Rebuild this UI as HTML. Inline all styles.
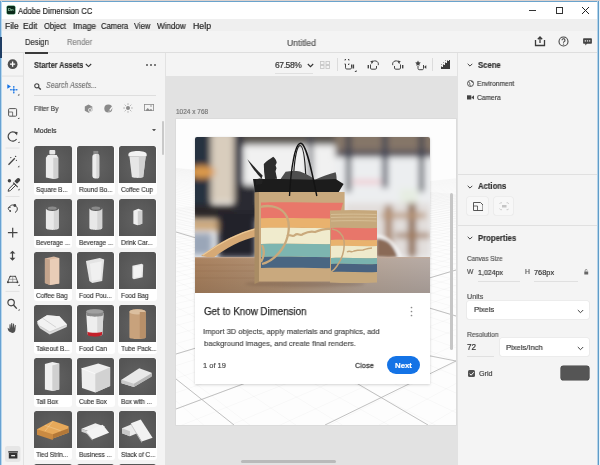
<!DOCTYPE html>
<html><head><meta charset="utf-8">
<style>
*{box-sizing:border-box;margin:0;padding:0}
html,body{width:600px;height:465px;overflow:hidden}
body{position:relative;background:#f4f4f4;font-family:"Liberation Sans",sans-serif;color:#333}
.t{will-change:transform;-webkit-text-stroke:.18px currentColor}
.a{position:absolute}
.t{position:absolute;white-space:nowrap;line-height:1}
.lbl{font-size:7px;color:#2c2c2c;letter-spacing:-0.1px;-webkit-text-stroke:.1px #2c2c2c}
</style></head><body>
<!-- window frame -->
<div class="a" style="left:0;top:0;width:600px;height:1px;background:#dcd2cf"></div>
<div class="a" style="left:0;top:1px;width:600px;height:1px;background:#6aa3cc"></div>
<!-- title bar -->
<div class="a" style="left:0;top:2px;width:600px;height:17px;background:#fff"></div>
<!-- menu bar -->
<div class="a" style="left:0;top:19px;width:600px;height:12px;background:#efefef"></div>
<!-- tab bar -->
<div class="a" style="left:0;top:31px;width:600px;height:21px;background:#f4f4f4"></div>
<div class="a" style="left:0;top:52px;width:600px;height:1px;background:#dedede"></div>
<!-- left toolbar -->
<div class="a" style="left:0;top:53px;width:23px;height:412px;background:#f4f4f4"></div>
<div class="a" style="left:23px;top:53px;width:1px;height:412px;background:#e2e2e2"></div>

<!-- toolbar -->
<svg class="a" style="left:0;top:53px" width="23" height="412" viewBox="0 53 23 412">
<g fill="#505050" stroke="none">
<circle cx="12.6" cy="64.2" r="4.9"/>
</g>
<path d="M12.6 61.6v5.2M10 64.2h5.2" stroke="#fff" stroke-width="1.3"/>
<rect x="2" y="75.6" width="21" height="1" fill="#e2e2e2"/>
<path d="M7.3 84.3l3.6 2.2-3.6 2.3z" fill="#1473e6"/>
<g fill="#1473e6"><circle cx="13.8" cy="86.7" r=".8"/><circle cx="13.8" cy="92.8" r=".8"/><circle cx="10.8" cy="89.8" r=".8"/><circle cx="16.8" cy="89.8" r=".8"/><circle cx="13.8" cy="89.8" r=".9"/></g>
<path d="M11 89.8h5.6M13.8 87v5.6" stroke="#1473e6" stroke-width=".7"/>
<g fill="#333"><path d="M19.3 93.8v1.6h-1.6z"/><path d="M19.3 117.4v1.6h-1.6z"/><path d="M19.5 141.4v1.6h-1.6z"/><path d="M19.3 165.6v1.6h-1.6z"/><path d="M19.5 188.6v1.6h-1.6z"/><path d="M19.6 284.3v1.6H18z"/><path d="M19.6 309v1.6H18z"/></g>
<rect x="8.6" y="108.6" width="8" height="7.6" rx="1" fill="none" stroke="#555" stroke-width="1"/>
<path d="M8.8 112h3.8v4" fill="none" stroke="#555" stroke-width=".8"/>
<path d="M16.2 133.5A4.6 4.6 0 1 0 16.6 139" fill="none" stroke="#444" stroke-width="1.2"/>
<path d="M14.2 131.8l3.4.1-.6 3.5z" fill="#444"/>
<rect x="5.5" y="147.6" width="14" height=".9" fill="#e0e0e0"/>
<path d="M8.5 164.8l6.3-6.6" stroke="#444" stroke-width="1.3"/>
<g fill="#444"><circle cx="10.8" cy="157.6" r=".7"/><circle cx="15.6" cy="156.4" r=".7"/><circle cx="16.4" cy="160.3" r=".6"/></g>
<path d="M14.3 183.5l-5.6 5.6-.6 2.2 2.2-.6 5.6-5.6z" fill="none" stroke="#444" stroke-width="1"/>
<path d="M13.2 182.6l4.5 4.5M15.2 181.2l2.2-2.2c.5-.5 1.3-.5 1.8 0s.5 1.3 0 1.8l-2.2 2.2z" stroke="#444" stroke-width="1.1" fill="#444"/>
<circle cx="9.4" cy="180.8" r="1.7" fill="#444"/>
<rect x="5.5" y="196" width="14" height=".9" fill="#e0e0e0"/>
<path d="M10.5 207.5C8 206 7.5 209 9.5 210.5M15.5 206c2.5 1 2.5 5-.5 6.5" fill="none" stroke="#444" stroke-width="1"/>
<path d="M9 208c1-3 4-4 6.5-2" fill="none" stroke="#444" stroke-width="1"/>
<circle cx="14.8" cy="205.5" r="1.4" fill="#444"/><circle cx="10.2" cy="211" r=".9" fill="#444"/>
<path d="M12.7 227.8v9.6M7.9 232.6h9.6" stroke="#444" stroke-width="1.2"/>
<path d="M12.5 252.5v6.5" stroke="#444" stroke-width="1.2"/>
<path d="M9.6 253.5l2.9-2.8 2.9 2.8zM9.6 257.8l2.9 3 2.9-3z" fill="#444"/>
<path d="M7.6 282.3l2.4-6h5.5l2.3 6z" fill="none" stroke="#444" stroke-width=".9"/>
<path d="M12.7 276.3v6M9 279.3h7.3" stroke="#777" stroke-width=".6"/>
<g fill="#444"><circle cx="8" cy="282.2" r="1"/><circle cx="17.4" cy="282.2" r="1"/><circle cx="10.3" cy="276.5" r=".7"/><circle cx="15.2" cy="276.5" r=".7"/></g>
<rect x="5.5" y="290.9" width="14" height=".9" fill="#e0e0e0"/>
<circle cx="11.1" cy="302.6" r="3.2" fill="none" stroke="#444" stroke-width="1.2"/>
<path d="M13.5 305l3.3 3.6" stroke="#444" stroke-width="1.4"/>
<path d="M9.5 331.8c-1.2-1-2-2.6-1.8-4 .5.2 1.2.8 1.6 1.5l.2-4.6c.2-.6 1-.6 1.1 0l.2 3.5.4-4.8c.2-.6 1-.6 1.1 0l.2 4.7.6-4.2c.2-.6.9-.5 1 .1l.1 4.3.7-3c.2-.5.9-.4.9.1l-.4 4.6c-.2 1.8-1.4 3-3.1 3z" fill="#505050"/>
<rect x="5" y="446" width="15.5" height="16" rx="2.5" fill="#e6e6e6"/>
<rect x="8.3" y="451.2" width="9.6" height="1.4" fill="#333"/>
<rect x="8.8" y="453" width="8.6" height="5.5" fill="#333"/>
<rect x="11.2" y="455" width="3.8" height="1.3" fill="#e6e6e6"/>
</svg>
<!-- end toolbar -->
<!-- assets panel -->
<div class="a" style="left:24px;top:53px;width:142px;height:412px;background:#f4f4f4"></div>
<div class="a" style="left:165px;top:53px;width:1px;height:412px;background:#e2e2e2"></div>







<!-- assets panel content -->
<div class="t" id="starter" style="left:33.8px;top:61.5px;font-size:8.2px;font-weight:bold;color:#333;transform:scaleX(.89);transform-origin:0 0">Starter Assets</div>
<svg class="a" style="left:85px;top:63px" width="7" height="5" viewBox="0 0 7 5"><path d="M.8 1l2.7 2.6L6.2 1" fill="none" stroke="#333" stroke-width="1.1"/></svg>
<div class="a" style="left:145.5px;top:63.6px;width:2px;height:2px;border-radius:1px;background:#555;box-shadow:4px 0 0 #555,8px 0 0 #555"></div>
<svg class="a" style="left:34px;top:82.5px" width="7.5" height="7" viewBox="0 0 7.5 7"><circle cx="2.8" cy="2.8" r="2.1" fill="none" stroke="#444" stroke-width="1.1"/><path d="M4.3 4.3L6.8 6.6" stroke="#444" stroke-width="1.4"/></svg>
<div class="t" id="search" style="left:45.5px;top:81.3px;font-size:8.6px;font-style:italic;color:#777;transform:scaleX(.82);transform-origin:0 0">Search Assets...</div>
<div class="a" style="left:34px;top:94.5px;width:122px;height:1px;background:#dedede"></div>
<div class="t" id="filter" style="left:33.8px;top:104.8px;font-size:7px;color:#444;transform:scaleX(.95);transform-origin:0 0">Filter By</div>
<svg class="a" style="left:84px;top:103.5px" width="9" height="9" viewBox="0 0 9 9"><path d="M4.5.5l3.7 2v4.2l-3.7 2-3.7-2V2.5z" fill="#8a8a8a"/><path d="M4.5 4.5l3.7-2v4.2l-3.7 2z" fill="#a8a8a8"/><circle cx="6" cy="6" r="1.8" fill="#f4f4f4"/><circle cx="6" cy="6" r="1" fill="#8a8a8a"/></svg>
<svg class="a" style="left:104px;top:103.5px" width="9" height="9" viewBox="0 0 9 9"><circle cx="4.3" cy="4.5" r="4" fill="#8a8a8a"/><path d="M4.5 8.2L8.3 3" stroke="#f4f4f4" stroke-width="1.4"/><circle cx="5" cy="7" r=".9" fill="#8a8a8a"/></svg>
<svg class="a" style="left:123px;top:102.8px" width="10" height="10" viewBox="0 0 10 10"><circle cx="5" cy="5" r="2" fill="#8a8a8a"/><g stroke="#9a9a9a" stroke-width=".8"><path d="M5 .3v1.6M5 8.1v1.6M.3 5h1.6M8.1 5h1.6M1.7 1.7l1.1 1.1M7.2 7.2l1.1 1.1M1.7 8.3l1.1-1.1M7.2 2.8l1.1-1.1"/></g></svg>
<svg class="a" style="left:143.5px;top:103.8px" width="10" height="7.5" viewBox="0 0 10 7.5"><rect x=".4" y=".4" width="9.2" height="6.7" fill="none" stroke="#8a8a8a" stroke-width=".8"/><path d="M1 7l2.7-3 2 2 1.3-1.3L9 7z" fill="#8a8a8a"/><rect x="6" y="1.5" width="2" height="1" fill="#9a9a9a"/></svg>
<div class="t" id="models" style="left:34px;top:126.8px;font-size:7px;color:#333">Models</div>
<svg class="a" style="left:151.5px;top:128.5px" width="4" height="2.5" viewBox="0 0 4 2.5"><path d="M0 0h4L2 2.5z" fill="#555"/></svg>
<div class="a" style="left:162.2px;top:121.2px;width:2.2px;height:34px;background:#c9c9c9;border-radius:1px"></div>
<div class="a" style="left:33.7px;top:145.8px;width:38.8px;height:48.9px;background:#fff;border-radius:3px"></div>
<div class="a" style="left:34.3px;top:146.4px;width:37.6px;height:36.5px;background:radial-gradient(ellipse at 50% 55%,#626262,#555 80%);border-radius:2.5px 2.5px 0 0;overflow:hidden">
<svg width="37.6" height="36.5" viewBox="0 0 38 37" style="display:block"><rect x="15.5" y="4" width="6" height="4.5" rx="1" fill="#e8e8e8"/><path d="M14 9h9l1.5 3v20.5l-5 1-7.5-1.5V12z" fill="#ececec"/><path d="M19.5 12l5-0v20.5l-5 1z" fill="#d0d0d0"/></svg>
</div>
<div class="t lbl" style="left:36.3px;top:185.7px;transform:scaleX(.93);transform-origin:0 0">Square B...</div>
<div class="a" style="left:76.0px;top:145.8px;width:38.8px;height:48.9px;background:#fff;border-radius:3px"></div>
<div class="a" style="left:76.6px;top:146.4px;width:37.6px;height:36.5px;background:radial-gradient(ellipse at 50% 55%,#626262,#555 80%);border-radius:2.5px 2.5px 0 0;overflow:hidden">
<svg width="37.6" height="36.5" viewBox="0 0 38 37" style="display:block"><rect x="16.5" y="5" width="5" height="3.5" fill="#8a8a8a"/><rect x="15.5" y="8" width="7" height="25" rx="3" fill="#ececec"/><rect x="19.5" y="8" width="3" height="25" rx="1.5" fill="#d6d6d6"/></svg>
</div>
<div class="t lbl" style="left:78.6px;top:185.7px;transform:scaleX(.93);transform-origin:0 0">Round Bo...</div>
<div class="a" style="left:118.1px;top:145.8px;width:38.8px;height:48.9px;background:#fff;border-radius:3px"></div>
<div class="a" style="left:118.7px;top:146.4px;width:37.6px;height:36.5px;background:radial-gradient(ellipse at 50% 55%,#626262,#555 80%);border-radius:2.5px 2.5px 0 0;overflow:hidden">
<svg width="37.6" height="36.5" viewBox="0 0 38 37" style="display:block"><path d="M9.5 8.5C9.5 4 28 4 28 8.5L28 10.5H9.5z" fill="#f2f2f2"/><path d="M10.5 10.5h16.5l-2.5 21c-3 1.2-8.5 1.2-11.5 0z" fill="#e6e6e6"/><path d="M20 10.5h7l-2.5 21-4 .6z" fill="#d2d2d2"/></svg>
</div>
<div class="t lbl" style="left:120.7px;top:185.7px;transform:scaleX(.93);transform-origin:0 0">Coffee Cup</div>
<div class="a" style="left:33.7px;top:198.8px;width:38.8px;height:48.9px;background:#fff;border-radius:3px"></div>
<div class="a" style="left:34.3px;top:199.4px;width:37.6px;height:36.5px;background:radial-gradient(ellipse at 50% 55%,#626262,#555 80%);border-radius:2.5px 2.5px 0 0;overflow:hidden">
<svg width="37.6" height="36.5" viewBox="0 0 38 37" style="display:block"><path d="M12 10c0-3 13-3 13 0v19.5c0 2.5-13 2.5-13 0z" fill="#e8e8e8"/><path d="M20 9v21.5c3 0 5-.5 5-1V10z" fill="#d4d4d4"/><ellipse cx="18.5" cy="9.5" rx="6.5" ry="2.6" fill="#5e5e5e"/><ellipse cx="18.5" cy="9.3" rx="4.5" ry="1.6" fill="#8a8a8a"/></svg>
</div>
<div class="t lbl" style="left:36.3px;top:238.7px;transform:scaleX(.93);transform-origin:0 0">Beverage ...</div>
<div class="a" style="left:76.0px;top:198.8px;width:38.8px;height:48.9px;background:#fff;border-radius:3px"></div>
<div class="a" style="left:76.6px;top:199.4px;width:37.6px;height:36.5px;background:radial-gradient(ellipse at 50% 55%,#626262,#555 80%);border-radius:2.5px 2.5px 0 0;overflow:hidden">
<svg width="37.6" height="36.5" viewBox="0 0 38 37" style="display:block"><path d="M12.5 10c0-3 13-3 13 0v19.5c0 2.5-13 2.5-13 0z" fill="#e8e8e8"/><path d="M20.5 9v21.5c3 0 5-.5 5-1V10z" fill="#d4d4d4"/><ellipse cx="19" cy="9.5" rx="6.5" ry="2.6" fill="#5e5e5e"/><ellipse cx="19" cy="9.3" rx="4.5" ry="1.6" fill="#8a8a8a"/></svg>
</div>
<div class="t lbl" style="left:78.6px;top:238.7px;transform:scaleX(.93);transform-origin:0 0">Beverage ...</div>
<div class="a" style="left:118.1px;top:198.8px;width:38.8px;height:48.9px;background:#fff;border-radius:3px"></div>
<div class="a" style="left:118.7px;top:199.4px;width:37.6px;height:36.5px;background:radial-gradient(ellipse at 50% 55%,#626262,#555 80%);border-radius:2.5px 2.5px 0 0;overflow:hidden">
<svg width="37.6" height="36.5" viewBox="0 0 38 37" style="display:block"><path d="M14.5 12l5-2 4 1.5v13.5l-5 1.5-4-1.5z" fill="#eeeeee"/><path d="M19 12.5l4.5-1v13.5l-4.5 1.5z" fill="#cfcfcf"/></svg>
</div>
<div class="t lbl" style="left:120.7px;top:238.7px;transform:scaleX(.93);transform-origin:0 0">Drink Car...</div>
<div class="a" style="left:33.7px;top:251.8px;width:38.8px;height:48.9px;background:#fff;border-radius:3px"></div>
<div class="a" style="left:34.3px;top:252.4px;width:37.6px;height:36.5px;background:radial-gradient(ellipse at 50% 55%,#626262,#555 80%);border-radius:2.5px 2.5px 0 0;overflow:hidden">
<svg width="37.6" height="36.5" viewBox="0 0 38 37" style="display:block"><path d="M11 6.5l9-2 5.5 1.5v26l-9.5 1.5-5-2z" fill="#dcbba3"/><path d="M16 7.5l9.5-1.5v26L16 33.5z" fill="#e9cdb7"/><path d="M11 6.5l5 1v26l-5-2z" fill="#c4a48c"/></svg>
</div>
<div class="t lbl" style="left:36.3px;top:291.7px;transform:scaleX(.93);transform-origin:0 0">Coffee Bag</div>
<div class="a" style="left:76.0px;top:251.8px;width:38.8px;height:48.9px;background:#fff;border-radius:3px"></div>
<div class="a" style="left:76.6px;top:252.4px;width:37.6px;height:36.5px;background:radial-gradient(ellipse at 50% 55%,#626262,#555 80%);border-radius:2.5px 2.5px 0 0;overflow:hidden">
<svg width="37.6" height="36.5" viewBox="0 0 38 37" style="display:block"><path d="M9 9l14-3 4.5 1.5-2 22-10 2-3-2z" fill="#e4e4e4"/><path d="M13 12l12-2.5-1 18-9 2z" fill="#f0f0f0"/></svg>
</div>
<div class="t lbl" style="left:78.6px;top:291.7px;transform:scaleX(.93);transform-origin:0 0">Food Pou...</div>
<div class="a" style="left:118.1px;top:251.8px;width:38.8px;height:48.9px;background:#fff;border-radius:3px"></div>
<div class="a" style="left:118.7px;top:252.4px;width:37.6px;height:36.5px;background:radial-gradient(ellipse at 50% 55%,#626262,#555 80%);border-radius:2.5px 2.5px 0 0;overflow:hidden">
<svg width="37.6" height="36.5" viewBox="0 0 38 37" style="display:block"><path d="M13.5 14l9.5-2 1.5 1-.5 12.5-9 2-1.5-1z" fill="#e8e8e8"/><path d="M15 15l8-1.5-.5 11-7.5 1.5z" fill="#f3f3f3"/></svg>
</div>
<div class="t lbl" style="left:120.7px;top:291.7px;transform:scaleX(.93);transform-origin:0 0">Food Bag</div>
<div class="a" style="left:33.7px;top:304.8px;width:38.8px;height:48.9px;background:#fff;border-radius:3px"></div>
<div class="a" style="left:34.3px;top:305.4px;width:37.6px;height:36.5px;background:radial-gradient(ellipse at 50% 55%,#626262,#555 80%);border-radius:2.5px 2.5px 0 0;overflow:hidden">
<svg width="37.6" height="36.5" viewBox="0 0 38 37" style="display:block"><path d="M3.3 16.5l9.8-6 12.6.8 7.7 8.4-.3 2.5-17.2 7.7-10-6.3-2.6-4.5z" fill="#dcdcdc"/><path d="M3.3 16.5l9.8-6 12.6.8 7.7 8.4-17.5 7.2-9.9-5.9z" fill="#f2f2f2"/><path d="M8.5 13.3l13.8 9.3M6.1 21.5l9.8 5.9 17.2-7.2" stroke="#c8c8c8" stroke-width=".7" fill="none"/></svg>
</div>
<div class="t lbl" style="left:36.3px;top:344.7px;transform:scaleX(.93);transform-origin:0 0">Takeout B...</div>
<div class="a" style="left:76.0px;top:304.8px;width:38.8px;height:48.9px;background:#fff;border-radius:3px"></div>
<div class="a" style="left:76.6px;top:305.4px;width:37.6px;height:36.5px;background:radial-gradient(ellipse at 50% 55%,#626262,#555 80%);border-radius:2.5px 2.5px 0 0;overflow:hidden">
<svg width="37.6" height="36.5" viewBox="0 0 38 37" style="display:block"><path d="M9.3 8.5c0-3 17.5-3 17.5 0l-1.2 21c0 2.5-15 2.5-15 0z" fill="#eeeeee"/><path d="M20.5 7v24.5c3 0 5-.5 5.1-1.5L26.8 8.5z" fill="#d8d8d8"/><path d="M10.5 27c2.5 1.5 12.5 1.5 15 0l-.2 3c0 2.8-14.6 2.8-14.6 0z" fill="#c4202a"/><path d="M9.3 6.5c0-3 17.5-3 17.5 0v3.5c0 2.5-17.5 2.5-17.5 0z" fill="#8a8a8a"/><ellipse cx="18" cy="6.5" rx="8.75" ry="2.2" fill="#a0a0a0"/></svg>
</div>
<div class="t lbl" style="left:78.6px;top:344.7px;transform:scaleX(.93);transform-origin:0 0">Food Can</div>
<div class="a" style="left:118.1px;top:304.8px;width:38.8px;height:48.9px;background:#fff;border-radius:3px"></div>
<div class="a" style="left:118.7px;top:305.4px;width:37.6px;height:36.5px;background:radial-gradient(ellipse at 50% 55%,#626262,#555 80%);border-radius:2.5px 2.5px 0 0;overflow:hidden">
<svg width="37.6" height="36.5" viewBox="0 0 38 37" style="display:block"><path d="M10.5 7c0-3.5 16.5-3.5 16.5 0v26c0 2-16.5 2-16.5 0z" fill="#c8a27c"/><ellipse cx="18.75" cy="7" rx="8.25" ry="2.7" fill="#dbbf9f"/><path d="M21 7v27c3 0 6-.5 6-1V7z" fill="#b89069"/></svg>
</div>
<div class="t lbl" style="left:120.7px;top:344.7px;transform:scaleX(.93);transform-origin:0 0">Tube Pack...</div>
<div class="a" style="left:33.7px;top:357.8px;width:38.8px;height:48.9px;background:#fff;border-radius:3px"></div>
<div class="a" style="left:34.3px;top:358.4px;width:37.6px;height:36.5px;background:radial-gradient(ellipse at 50% 55%,#626262,#555 80%);border-radius:2.5px 2.5px 0 0;overflow:hidden">
<svg width="37.6" height="36.5" viewBox="0 0 38 37" style="display:block"><path d="M11 6l7.5-2 7 1.5v26.5l-7 1.5-7.5-1.5z" fill="#f0f0f0"/><path d="M18.5 7.5l7-2v26.5l-7 1.5z" fill="#d0d0d0"/></svg>
</div>
<div class="t lbl" style="left:36.3px;top:397.7px;transform:scaleX(.93);transform-origin:0 0">Tall Box</div>
<div class="a" style="left:76.0px;top:357.8px;width:38.8px;height:48.9px;background:#fff;border-radius:3px"></div>
<div class="a" style="left:76.6px;top:358.4px;width:37.6px;height:36.5px;background:radial-gradient(ellipse at 50% 55%,#626262,#555 80%);border-radius:2.5px 2.5px 0 0;overflow:hidden">
<svg width="37.6" height="36.5" viewBox="0 0 38 37" style="display:block"><path d="M4.5 10.5l17-5 12 4v19l-15 6.5-13.5-4.5z" fill="#eeeeee"/><path d="M18.5 16l15-6.5v19l-15 6.5z" fill="#d2d2d2"/><path d="M4.5 10.5l14 5.5" stroke="#ffffff" stroke-width=".6"/></svg>
</div>
<div class="t lbl" style="left:78.6px;top:397.7px;transform:scaleX(.93);transform-origin:0 0">Cube Box</div>
<div class="a" style="left:118.1px;top:357.8px;width:38.8px;height:48.9px;background:#fff;border-radius:3px"></div>
<div class="a" style="left:118.7px;top:358.4px;width:37.6px;height:36.5px;background:radial-gradient(ellipse at 50% 55%,#626262,#555 80%);border-radius:2.5px 2.5px 0 0;overflow:hidden">
<svg width="37.6" height="36.5" viewBox="0 0 38 37" style="display:block"><path d="M2.5 22l18-11.5 12.5 4.5v3.5l-18 11-12.5-4z" fill="#e9e9e9"/><path d="M2.5 22l12.5 4v3.5l-12.5-4z" fill="#c9c9c9"/><path d="M15 26l18-10.5v3.5l-18 10.5z" fill="#b8b8b8"/></svg>
</div>
<div class="t lbl" style="left:120.7px;top:397.7px;transform:scaleX(.93);transform-origin:0 0">Box with ...</div>
<div class="a" style="left:33.7px;top:410.8px;width:38.8px;height:48.9px;background:#fff;border-radius:3px"></div>
<div class="a" style="left:34.3px;top:411.4px;width:37.6px;height:36.5px;background:radial-gradient(ellipse at 50% 55%,#626262,#555 80%);border-radius:2.5px 2.5px 0 0;overflow:hidden">
<svg width="37.6" height="36.5" viewBox="0 0 38 37" style="display:block"><path d="M3 18.5l16-8.5 16 5.5v6.5l-16 6-16-4.5z" fill="#e7a95a"/><path d="M3 18.5l16 5v6L3 24z" fill="#c98a42"/><path d="M19 23.5l16-6v4.5l-16 6z" fill="#b37838"/><path d="M11 14.5l16 5.5M19 10.5l-8 10" stroke="#f0d2a0" stroke-width=".5"/></svg>
</div>
<div class="t lbl" style="left:36.3px;top:450.7px;transform:scaleX(.93);transform-origin:0 0">Tied Strin...</div>
<div class="a" style="left:76.0px;top:410.8px;width:38.8px;height:48.9px;background:#fff;border-radius:3px"></div>
<div class="a" style="left:76.6px;top:411.4px;width:37.6px;height:36.5px;background:radial-gradient(ellipse at 50% 55%,#626262,#555 80%);border-radius:2.5px 2.5px 0 0;overflow:hidden">
<svg width="37.6" height="36.5" viewBox="0 0 38 37" style="display:block"><path d="M4.5 18l14-5.5 10 3.5-14 5.5z" fill="#f0f0f0"/><path d="M4.5 18l10 3.5v3l-10-3.5z" fill="#cfcfcf"/><path d="M9 21l17-7 6.5 8-17 7z" fill="#f4f4f4"/><path d="M9 21l6.5 8v1L9 22z" fill="#c6c6c6"/></svg>
</div>
<div class="t lbl" style="left:78.6px;top:450.7px;transform:scaleX(.93);transform-origin:0 0">Business ...</div>
<div class="a" style="left:118.1px;top:410.8px;width:38.8px;height:48.9px;background:#fff;border-radius:3px"></div>
<div class="a" style="left:118.7px;top:411.4px;width:37.6px;height:36.5px;background:radial-gradient(ellipse at 50% 55%,#626262,#555 80%);border-radius:2.5px 2.5px 0 0;overflow:hidden">
<svg width="37.6" height="36.5" viewBox="0 0 38 37" style="display:block"><path d="M3 17.5l11-4.5 8 3v5l-11 4.5-8-3z" fill="#eaeaea"/><path d="M3 17.5l8 3v5l-8-3z" fill="#c9c9c9"/><path d="M12 12.5l10-4 12 18.5-11 4z" fill="#f2f2f2"/><path d="M12 12.5l11 18.5v1.5L12 14z" fill="#c4c4c4"/></svg>
</div>
<div class="t lbl" style="left:120.7px;top:450.7px;transform:scaleX(.93);transform-origin:0 0">Stack of C...</div>
<div class="a" style="left:33.7px;top:463.8px;width:38.8px;height:48.9px;background:#fff;border-radius:3px"></div>
<div class="a" style="left:34.3px;top:464.4px;width:37.6px;height:36.5px;background:radial-gradient(ellipse at 50% 55%,#626262,#555 80%);border-radius:2.5px 2.5px 0 0;overflow:hidden">
</div>
<div class="a" style="left:76.0px;top:463.8px;width:38.8px;height:48.9px;background:#fff;border-radius:3px"></div>
<div class="a" style="left:76.6px;top:464.4px;width:37.6px;height:36.5px;background:radial-gradient(ellipse at 50% 55%,#626262,#555 80%);border-radius:2.5px 2.5px 0 0;overflow:hidden">
</div>
<div class="a" style="left:118.1px;top:463.8px;width:38.8px;height:48.9px;background:#fff;border-radius:3px"></div>
<div class="a" style="left:118.7px;top:464.4px;width:37.6px;height:36.5px;background:radial-gradient(ellipse at 50% 55%,#626262,#555 80%);border-radius:2.5px 2.5px 0 0;overflow:hidden">
</div>
<!-- end assets -->
<!-- viewport -->
<div class="a" style="left:166px;top:53px;width:292px;height:23px;background:#f4f4f4"></div>
<div class="a" style="left:166px;top:76px;width:292px;height:389px;background:#e2e2e2"></div>
<!-- canvas -->
<div class="a" style="left:176px;top:119px;width:280px;height:306px;background:#fdfdfd;box-shadow:0 0 0 .6px #d6d6d6"></div>

<!-- grid -->
<svg class="a" style="left:176px;top:119px" width="280" height="306" viewBox="176 119 280 306">
<path d="M119.7 163.0L3209.2 454.6M116.6 163.1L3153.9 455.2M113.5 163.3L3098.5 455.8M110.3 163.4L3043.2 456.4M107.1 163.5L2987.8 457.1M103.9 163.7L2932.5 457.7M100.6 163.8L2877.1 458.3M97.4 164.0L2821.8 459.0M94.1 164.1L2766.5 459.6M90.7 164.3L2711.1 460.2M87.4 164.4L2655.8 460.9M84.0 164.5L2600.4 461.5M80.6 164.7L2545.1 462.1M77.2 164.8L2489.8 462.7M73.7 165.0L2434.4 463.4M70.2 165.1L2379.1 464.0M66.7 165.3L2323.7 464.6M63.2 165.4L2268.4 465.3M59.6 165.6L2213.1 465.9M56.0 165.8L2157.7 466.5M52.4 165.9L2102.4 467.2M48.7 166.1L2047.0 467.8M45.0 166.2L1991.7 468.4M41.3 166.4L1936.4 469.1M37.5 166.6L1881.0 469.7M33.7 166.7L1825.7 470.3M29.9 166.9L1770.3 470.9M26.0 167.1L1715.0 471.6M22.2 167.2L1659.6 472.2M18.2 167.4L1604.3 472.8M14.3 167.6L1549.0 473.5M10.3 167.7L1493.6 474.1M6.3 167.9L1438.3 474.7M2.2 168.1L1382.9 475.4M-1.9 168.3L1327.6 476.0M-6.0 168.4L1272.3 476.6M-10.2 168.6L1216.9 477.3M-14.4 168.8L1161.6 477.9M-18.7 169.0L1106.2 478.5M-22.9 169.2L1050.9 479.1M-27.3 169.4L995.6 479.8M-31.6 169.5L940.2 480.4M-36.0 169.7L884.9 481.0M-40.5 169.9L829.5 481.7M-45.0 170.1L774.2 482.3M-49.5 170.3L718.9 482.9M-54.0 170.5L663.5 483.6M-58.7 170.7L608.2 484.2M-63.3 170.9L552.8 484.8M-68.0 171.1L497.5 485.5M-72.8 171.3L442.1 486.1M-77.5 171.5L386.8 486.7M-82.4 171.7L331.5 487.3M-87.3 172.0L276.1 488.0M-92.2 172.2L220.8 488.6M-97.2 172.4L165.4 489.2M-102.2 172.6L110.1 489.9M645.1 158.4L-2753.1 522.5M648.6 158.5L-2691.6 521.8M652.1 158.6L-2630.0 521.1M655.6 158.7L-2568.5 520.4M659.2 158.8L-2507.0 519.7M662.8 158.8L-2445.4 519.0M666.5 158.9L-2383.9 518.3M670.1 159.0L-2322.3 517.6M673.8 159.1L-2260.8 516.9M677.6 159.2L-2199.2 516.2M681.4 159.3L-2137.7 515.5M685.2 159.4L-2076.2 514.8M689.0 159.5L-2014.6 514.1M692.9 159.6L-1953.1 513.4M696.9 159.7L-1891.5 512.7M700.8 159.8L-1830.0 512.0M704.8 159.9L-1768.5 511.3M708.9 159.9L-1706.9 510.6M713.0 160.0L-1645.4 509.9M717.1 160.1L-1583.8 509.2M721.3 160.2L-1522.3 508.5M725.5 160.3L-1460.7 507.8M729.7 160.4L-1399.2 507.1M734.0 160.5L-1337.7 506.4M738.3 160.7L-1276.1 505.7M742.7 160.8L-1214.6 505.0M747.2 160.9L-1153.0 504.3M751.6 161.0L-1091.5 503.6M756.1 161.1L-1029.9 502.9M760.7 161.2L-968.4 502.2M765.3 161.3L-906.9 501.5M770.0 161.4L-845.3 500.8M774.7 161.5L-783.8 500.1M779.4 161.6L-722.2 499.4M784.2 161.8L-660.7 498.7M789.1 161.9L-599.2 498.0M794.0 162.0L-537.6 497.2M799.0 162.1L-476.1 496.5M804.0 162.2L-414.5 495.8M809.1 162.3L-353.0 495.1M814.2 162.5L-291.4 494.4M819.4 162.6L-229.9 493.7M824.6 162.7L-168.4 493.0M829.9 162.8L-106.8 492.3M835.3 163.0L-45.3 491.6M840.7 163.1L16.3 490.9M846.2 163.2L77.8 490.2M851.7 163.4L139.3 489.5M857.4 163.5L200.9 488.8M863.0 163.6L262.4 488.1M868.8 163.8L324.0 487.4M874.6 163.9L385.5 486.7M880.5 164.1L447.1 486.0" stroke="#000" stroke-opacity=".045" stroke-width=".6" fill="none"/>
<g stroke="#b0b0b0" stroke-width=".8" fill="none">
<path d="M176 232L456 316"/>
<path d="M176 354L456 270"/>
<path d="M400 350L456 361"/>
<path d="M325 425L456 361"/>
<path d="M300 350L428 425"/>
<path d="M176 379L234 425"/>
<path d="M176 409L260 377.7"/>
</g>
</svg>
<!-- end grid -->
<!-- card -->
<div class="a" style="left:195px;top:137px;width:235px;height:247px;background:#fff;box-shadow:0 1px 3px rgba(0,0,0,.16),0 0 1px rgba(0,0,0,.1);border-radius:2px 2px 0 0"></div>


















<!-- photo -->
<svg class="a" style="left:195px;top:137px;border-radius:2px 2px 0 0" width="235" height="156" viewBox="0 0 235 156">
<defs>
<filter id="b3" x="-20%" y="-20%" width="140%" height="140%"><feGaussianBlur stdDeviation="3"/></filter>
<filter id="b2" x="-20%" y="-20%" width="140%" height="140%"><feGaussianBlur stdDeviation="1.8"/></filter>
<filter id="b1" x="-20%" y="-20%" width="140%" height="140%"><feGaussianBlur stdDeviation=".5"/></filter>
<linearGradient id="tbl" x1="0" y1="0" x2="1" y2="0"><stop offset="0" stop-color="#aa825f"/><stop offset=".35" stop-color="#b39376"/><stop offset=".7" stop-color="#b8a698"/><stop offset="1" stop-color="#b8aca6"/></linearGradient>
<linearGradient id="tblv" x1="0" y1="0" x2="0" y2="1"><stop offset="0" stop-color="#000" stop-opacity="0"/><stop offset="1" stop-color="#000" stop-opacity=".12"/></linearGradient>
<clipPath id="pc"><rect width="235" height="156"/></clipPath>
</defs>
<g clip-path="url(#pc)">
<rect width="235" height="156" fill="#eeeff0"/>
<g filter="url(#b3)">
<rect x="-10" y="-10" width="260" height="18" fill="#5a5550"/>
<rect x="140" y="-10" width="100" height="30" fill="#857668"/>
<rect x="140" y="13" width="100" height="7" fill="#5e5a60"/>
<rect x="50" y="8" width="90" height="60" fill="#f1f1f1"/>
<rect x="140" y="22" width="100" height="48" fill="#eceef0"/>
<rect x="-10" y="-10" width="26" height="85" fill="#283040"/>
<rect x="16" y="-5" width="23" height="70" fill="#d9cdbd"/>
<rect x="39" y="-5" width="9" height="66" fill="#2e3240"/>
<ellipse cx="7" cy="35" rx="13" ry="6.5" fill="#dc9a4c"/>
<rect x="113.5" y="-5" width="4" height="50" fill="#454a58"/>
<rect x="151" y="-5" width="5" height="60" fill="#363d4e"/>
<rect x="187.5" y="-5" width="5" height="56" fill="#3a4152"/>
<rect x="224" y="-5" width="5" height="60" fill="#363d4e"/>
<rect x="158" y="43" width="28" height="4" fill="#efc4cc"/>
<rect x="205" y="52" width="18" height="18" fill="#e6ede2"/>
<rect x="-5" y="68" width="72" height="14" fill="#2a2628"/><rect x="39" y="48" width="26" height="30" fill="#2c2a30"/>

<rect x="150" y="66" width="85" height="54" fill="#e2dedc"/>
<rect x="-5" y="84" width="30" height="9" fill="#c9a272"/>
<rect x="-5" y="96" width="22" height="22" fill="#9aa6b8"/>
<rect x="23" y="75" width="38" height="46" fill="#20222a"/>
<rect x="190" y="68" width="7" height="52" fill="#a07858"/>
<rect x="213" y="66" width="8" height="54" fill="#8e6a50"/>
<rect x="186" y="76" width="45" height="5" fill="#b89474"/><rect x="200" y="96" width="35" height="5" fill="#a07a5c"/>
</g>
<g filter="url(#b2)">

<path d="M181.5 98c11 0 21 8 25 22h-3c-4-12-11-19-22-19z" fill="#f6f6f6"/>
<path d="M181.5 101.5c9.5 0 16.5 6 21 18.5h-21z" fill="#8a6a56"/>
</g>
<g filter="url(#b1)"><path d="M6 119C24 105 42 96 62 90.5l1.2 8.5C46 103 31 111 18 121z" fill="#d6a974"/><path d="M8 118C26 105 44 96 62 91.5" stroke="#eccb9a" stroke-width="1.2" fill="none"/></g>
<rect x="0" y="120" width="235" height="36" fill="url(#tbl)"/>
<rect x="0" y="120" width="235" height="36" fill="url(#tblv)"/>
<rect x="0" y="120" width="235" height="1.2" fill="#c4ab98" opacity=".7"/>
<g opacity=".25" filter="url(#b1)"><path d="M0 128h120M0 134h110M0 141h125" stroke="#8a6448" stroke-width="1"/></g>
<ellipse cx="110" cy="147" rx="60" ry="3" fill="#5a4030" opacity=".25" filter="url(#b2)"/>
<!-- handles back -->
<path d="M98.5 42C99 25 101.5 9 105 8.5c3 0 5 14 5.8 31" fill="none" stroke="#1e1e1e" stroke-width="1.2"/>
<!-- tissue -->
<path d="M52.3 22.2c4 4 9 10 15.3 16.3l-1 3.3c-5-5-10-12-14.3-19.6z" fill="#262626"/>
<path d="M68.8 27c3-3 6-5 9.4-7.2 2 1.5 3.3 3.5 3.5 6l-1.2 2.5 1 3-1 3 .8 4 .8 3.5-12 1-1-8z" fill="#2c2c2c"/>
<path d="M85.6 42l5-7.2c5-1 10-.8 14.4-.3 6 2 11 5 14.8 8.2 7-3 14-5.8 20.8-7.4 1 3 1.2 6.5.9 9.7l7 2.2L60 48z" fill="#4e4e4e"/>
<path d="M58 42h27.6l34.2.7 20.8-.6 8 5-4.9 8H60z" fill="#1c1c1c"/>
<path d="M61 42c3 0 4-1 7 0l-1 5-6 1z" fill="#222"/>
<!-- bag side -->
<path d="M59.5 55.5l4.5-.5v90l-4.5 2z" fill="#a98c64"/>
<!-- bag front -->
<rect x="64" y="55" width="85.6" height="89.5" fill="#c9a97e"/>
<g filter="url(#b1)">
<path d="M66 65.5c22-1 55 .5 82 .3l-2 7c-1 4 0 7 1 9.5-25 1-55-.6-81 0z" fill="#e9776a"/>
<path d="M66 81.3c25-.8 55 .5 82 0v9.7c-25 .5-57-.5-82 0z" fill="#e9b26e"/>
<path d="M66 91c25-.5 57 .5 82 0v16c-25 .5-57-.5-82 0z" fill="#f0ebcd"/>
<path d="M66 107c25-.5 57 .5 82 0v13c-25 .6-57-.5-82 0z" fill="#7db5b0"/>
<path d="M66 120c25-.6 57 .5 82 0v11c-25 .5-57-.5-82 0z" fill="#4a6682"/>
</g>
<path d="M65 70c12-3 23 1 27 10 4 10 1 23-5 32-5 7-12 13-20 15M67 108c3 5 2 12-1 17M92 99c3-3 5 2 8-1 3-3 5 2 8-1 4-2 8-3 12-2 5-2 10-4 16-3" fill="none" stroke="#c9a97c" stroke-width="2.3"/>
<!-- handles front -->
<path d="M94.5 59C96 30 100 7 105.5 6.3c5.5-.5 11 26 16.3 52.7" fill="none" stroke="#141414" stroke-width="1.4"/>
<!-- pouch -->
<path d="M135 73.5c15-.8 32-.8 47 0v72c-15 .8-32 .8-47 0z" fill="#c6a87c"/>
<path d="M136 77.5c14-.5 30-.5 45.5 0M136 80.5c14-.5 30-.5 45.5 0M136 84c14-.5 30-.5 45.5 0" stroke="#ddc7a0" stroke-width=".7" fill="none"/>
<g filter="url(#b1)">
<path d="M136 91c15-.6 30 .6 46 0v12c-15 .6-30-.6-46 0z" fill="#e8766a"/>
<path d="M136 103c15-.6 30 .6 46 0v6c-15 .6-30-.6-46 0z" fill="#e9b26e"/>
<path d="M136 109c15-.6 30 .6 46 0v12c-15 .6-30-.6-46 0z" fill="#efeacc"/>
<path d="M136 121c15-.6 30 .6 46 0v6c-15 .6-30-.6-46 0z" fill="#7ab3ae"/>
<path d="M136 127c15-.6 30 .6 46 0v8c-15 .6-30-.6-46 0z" fill="#486480"/>
</g>
<path d="M137 92c6 1 11 5 12 12 1 9-2 18-7 25-2 3-4 5-6 6M152 115c3-2 4 1 7-1 3-1 6-1 9-1 3-1 6-2 9-2" fill="none" stroke="#c6a67a" stroke-width="1.5"/>
</g>
</svg>
<!-- end photo -->


<!-- title content -->
<div class="a" style="left:6.5px;top:5.8px;width:8px;height:7.8px;background:#0b2a1b;border-radius:1.3px;box-shadow:0 0 0 .5px #3a8a5c"></div>
<div class="t" style="left:7.6px;top:8.1px;font-size:4.3px;font-weight:bold;color:#9fd8b4;-webkit-text-stroke:0">Dn</div>
<div class="t" id="title" style="left:17.8px;top:7px;font-size:9px;color:#222;transform:scaleX(.86);transform-origin:0 0">Adobe Dimension CC</div>
<div class="a" style="left:529px;top:10px;width:7px;height:1px;background:#333"></div>
<div class="a" style="left:555.5px;top:7px;width:7px;height:7px;border:1px solid #333"></div>
<svg class="a" style="left:581px;top:6px" width="9" height="9" viewBox="0 0 9 9"><path d="M1 1L8 8M8 1L1 8" stroke="#222" stroke-width="1"/></svg>
<!-- menu -->
<div class="t" style="left:4.6px;top:21.5px;font-size:8.5px;color:#222;transform:scaleX(1.0);transform-origin:0 0">File</div>
<div class="t" style="left:23px;top:21.5px;font-size:8.5px;color:#222;transform:scaleX(0.97);transform-origin:0 0">Edit</div>
<div class="t" style="left:43.5px;top:21.5px;font-size:8.5px;color:#222;transform:scaleX(0.89);transform-origin:0 0">Object</div>
<div class="t" style="left:72.5px;top:21.5px;font-size:8.5px;color:#222;transform:scaleX(0.97);transform-origin:0 0">Image</div>
<div class="t" style="left:100.8px;top:21.5px;font-size:8.5px;color:#222;transform:scaleX(0.9);transform-origin:0 0">Camera</div>
<div class="t" style="left:133.8px;top:21.5px;font-size:8.5px;color:#222;transform:scaleX(0.89);transform-origin:0 0">View</div>
<div class="t" style="left:157px;top:21.5px;font-size:8.5px;color:#222;transform:scaleX(0.95);transform-origin:0 0">Window</div>
<div class="t" style="left:192.5px;top:21.5px;font-size:8.5px;color:#222;transform:scaleX(1.03);transform-origin:0 0">Help</div>
<!-- tabs -->
<div class="t" id="design" style="left:24.6px;top:38px;font-size:8.8px;color:#333;transform:scaleX(.87);transform-origin:0 0">Design</div>
<div class="t" id="render" style="left:66.6px;top:38px;font-size:8.8px;color:#8a8a8a;transform:scaleX(.87);transform-origin:0 0">Render</div>
<div class="a" style="left:25px;top:52px;width:23px;height:2px;background:#3a3a3a"></div>
<div class="t" id="untitled" style="left:286.5px;top:38.5px;font-size:8.8px;color:#555;transform:scaleX(.97);transform-origin:0 0">Untitled</div>

<!-- tab bar right icons -->
<svg class="a" style="left:534px;top:35px" width="12" height="12" viewBox="0 0 12 12"><path d="M1.5 5v5.5h9V5" fill="none" stroke="#3c3c3c" stroke-width="1.3"/><path d="M6 8V2M3.8 4.2L6 2l2.2 2.2" fill="none" stroke="#3c3c3c" stroke-width="1.3"/><rect x="3.5" y="7" width="5" height="2" fill="#3c3c3c" opacity="0"/></svg>
<svg class="a" style="left:558px;top:36px" width="11" height="11" viewBox="0 0 11 11"><circle cx="5.5" cy="5.5" r="4.5" fill="none" stroke="#444" stroke-width="1.1"/><path d="M4 4.3a1.5 1.5 0 1 1 2.1 1.3c-.5.3-.6.6-.6 1.2" fill="none" stroke="#444" stroke-width="1.1"/><circle cx="5.5" cy="8.1" r=".7" fill="#444"/></svg>
<svg class="a" style="left:582.8px;top:37.8px" width="9" height="8" viewBox="0 0 9 8"><path d="M.8.3h7.4a.7.7 0 0 1 .7.7v4a.7.7 0 0 1-.7.7H4L2.3 7.6V5.7H.8A.7.7 0 0 1 .1 5V1A.7.7 0 0 1 .8.3z" fill="#444"/><rect x="1.7" y="2.3" width="1.3" height="1.2" fill="#f4f4f4"/><rect x="3.85" y="2.3" width="1.3" height="1.2" fill="#f4f4f4"/><rect x="6" y="2.3" width="1.3" height="1.2" fill="#f4f4f4"/></svg>
<!-- viewport toolbar -->
<div class="t" id="zoom" style="left:275px;top:61px;font-size:8.5px;color:#333;letter-spacing:-0.4px">67.58%</div>
<div class="a" style="left:275px;top:73px;width:38px;height:1px;background:#e0e0e0"></div>
<svg class="a" style="left:307px;top:63px" width="7" height="5" viewBox="0 0 7 5"><path d="M.8 1l2.7 2.7L6.2 1" fill="none" stroke="#333" stroke-width="1.1"/></svg>
<svg class="a" style="left:320px;top:61px" width="10" height="8" viewBox="0 0 10 8"><g fill="none" stroke="#c8c8c8" stroke-width=".9"><rect x=".5" y=".5" width="3.5" height="3"/><rect x="6" y=".5" width="3.5" height="3"/><rect x=".5" y="4.5" width="3.5" height="3"/><rect x="6" y="4.5" width="3.5" height="3"/></g></svg>
<div class="a" style="left:337px;top:58px;width:1px;height:13px;background:#dcdcdc"></div>
<svg class="a" style="left:343px;top:58px" width="15" height="15" viewBox="0 0 15 15"><g fill="none" stroke="#444" stroke-width="1"><path d="M2 2.5v-1h1M5 1.5h1v1M2 5.5v1h1M6 5.5v1H5" /><path d="M2.5 6.5v3.3c0 .7.4 1.2 1.2 1.2h3.6c.7 0 1.2-.5 1.2-1.2V6.5"/></g><rect x="9.5" y="6.5" width="1.6" height="4" fill="#444"/><path d="M13.5 12v2h-2z" fill="#333"/></svg>
<svg class="a" style="left:367px;top:59px" width="13" height="12" viewBox="0 0 13 12"><g fill="none" stroke="#444" stroke-width="1"><path d="M3.5 5.5v3.5c0 .7.5 1.2 1.2 1.2h3.6c.7 0 1.2-.5 1.2-1.2V7"/><path d="M4.5 4.5C5 2.5 7 1.5 9 2s2.8 2.5 2.2 4.2"/></g><path d="M3.2 2.2l3-.7-.8 3z" fill="#444"/><rect x=".6" y="6" width="1.4" height="3.4" fill="#444"/></svg>
<svg class="a" style="left:391px;top:59px" width="13" height="12" viewBox="0 0 13 12"><g fill="none" stroke="#444" stroke-width="1"><path d="M9.5 5.5v3.5c0 .7-.5 1.2-1.2 1.2H4.7c-.7 0-1.2-.5-1.2-1.2V7"/><path d="M8.5 4.5C8 2.5 6 1.5 4 2s-2.8 2.5-2.2 4.2"/></g><path d="M9.8 2.2l-3-.7.8 3z" fill="#444"/><rect x="11" y="6" width="1.4" height="3.4" fill="#444"/></svg>
<svg class="a" style="left:414.5px;top:59.5px" width="12" height="11" viewBox="0 0 12 11"><path d="M3 .6l.9 1.7 1.9.3-1.4 1.3.3 1.9L3 4.9l-1.7.9.3-1.9L.2 2.6l1.9-.3z" fill="#444"/><path d="M3 5.8v2.7c0 .7.5 1.2 1.2 1.2h3.1c.7 0 1.2-.5 1.2-1.2V5" fill="none" stroke="#444" stroke-width="1"/><path d="M9.6 6.2l1.7-1v3.6l-1.7-1z" fill="#444"/></svg>
<div class="a" style="left:432px;top:58px;width:1px;height:13px;background:#dcdcdc"></div>
<svg class="a" style="left:440.5px;top:60px" width="9" height="9" viewBox="0 0 9 9"><path d="M9 0v9H0v-2h2V5h2V3h2V1h2V0z" fill="#3a3a3a"/><g fill="#9a9a9a"><rect x="4" y="0" width="1" height="1"/><rect x="6" y="0" width="1" height="1"/><rect x="2" y="2" width="1" height="1"/><rect x="4" y="2" width="1" height="1"/><rect x="0" y="4" width="1" height="1"/><rect x="2" y="4" width="1" height="1"/><rect x="0" y="6" width="1" height="1"/></g></svg>

<div class="a" id="vscroll" style="left:449.5px;top:193px;width:3px;height:157px;border-radius:1.5px;background:#c6c6c6"></div>
<div class="a" id="hscroll" style="left:240.5px;top:459.5px;width:95.5px;height:3.7px;border-radius:1.8px;background:#bababa"></div>
<div class="t" id="dims" style="left:176px;top:108.5px;font-size:6.5px;color:#777">1024 x 768</div>
<!-- card text -->
<div class="t" id="c_title" style="left:203.5px;top:307px;font-size:10.4px;color:#2a2a2a;-webkit-text-stroke:.25px #2a2a2a;transform:scaleX(.94);transform-origin:0 0">Get to Know Dimension</div>
<svg class="a" style="left:410px;top:305.5px" width="3" height="11" viewBox="0 0 3 11"><circle cx="1.5" cy="1.5" r=".85" fill="#8a8a8a"/><circle cx="1.5" cy="5.5" r=".85" fill="#8a8a8a"/><circle cx="1.5" cy="9.5" r=".85" fill="#8a8a8a"/></svg>
<div class="t" id="c_l1" style="left:203px;top:328px;font-size:8px;color:#4b4b4b;transform:scaleX(.946);transform-origin:0 0">Import 3D objects, apply materials and graphics, add</div>
<div class="t" id="c_l2" style="left:203.5px;top:340px;font-size:8px;color:#4b4b4b;transform:scaleX(.946);transform-origin:0 0">background images, and create final renders.</div>
<div class="t" id="c_of" style="left:203.3px;top:361.5px;font-size:7.5px;color:#4b4b4b">1 of 19</div>
<div class="t" id="c_close" style="left:354.8px;top:361.5px;font-size:8px;color:#505050;-webkit-text-stroke:.35px #505050;transform:scaleX(.92);transform-origin:0 0">Close</div>
<div class="a" style="left:387px;top:355.6px;width:33px;height:18.4px;border-radius:9.2px;background:#1473e6"></div>
<div class="t" id="c_next" style="left:395px;top:361.5px;font-size:7.8px;font-weight:bold;color:#fff">Next</div>
<!-- end card -->
<!-- right panel -->
<div class="a" style="left:457px;top:53px;width:1px;height:412px;background:#e2e2e2"></div>
<div class="a" style="left:458px;top:53px;width:140px;height:412px;background:#f4f4f4"></div>

<!-- rp content -->
<svg class="a" style="left:466.5px;top:63px" width="6" height="4" viewBox="0 0 6 4"><path d="M.7 .8L3 3.1 5.3.8" fill="none" stroke="#444" stroke-width="1"/></svg>
<div class="t" id="scene" style="left:478px;top:61px;font-size:8.3px;font-weight:bold;color:#333;transform:scaleX(.93);transform-origin:0 0">Scene</div>
<svg class="a" style="left:467px;top:80px" width="7" height="7" viewBox="0 0 7 7"><circle cx="3.5" cy="3.5" r="3" fill="none" stroke="#444" stroke-width=".9"/><path d="M1.5 2c1 .3 1.5 1 1.3 2-.2.8.3 1.5 1 2M4.2 1c.2.8 1 1.2 2 1.2" fill="none" stroke="#444" stroke-width=".9"/></svg>
<div class="t" id="env" style="left:476.7px;top:79.5px;font-size:7px;color:#444;transform:scaleX(.95);transform-origin:0 0">Environment</div>
<svg class="a" style="left:467px;top:95px" width="7" height="5" viewBox="0 0 7 5"><rect x="0" y=".3" width="4.3" height="4.2" fill="#444"/><path d="M4.3 2.4L7 .3v4.2z" fill="#444"/></svg>
<div class="t" id="cam" style="left:477px;top:94px;font-size:7px;color:#444;transform:scaleX(.95);transform-origin:0 0">Camera</div>
<div class="a" style="left:458px;top:173.5px;width:139px;height:1px;background:#e0e0e0"></div>
<svg class="a" style="left:466.5px;top:184.5px" width="6" height="4" viewBox="0 0 6 4"><path d="M.7 .8L3 3.1 5.3.8" fill="none" stroke="#444" stroke-width="1"/></svg>
<div class="t" id="actions" style="left:478px;top:181.5px;font-size:8.3px;font-weight:bold;color:#333;transform:scaleX(.93);transform-origin:0 0">Actions</div>
<div class="a" style="left:467.3px;top:197.3px;width:20.3px;height:18px;border-radius:2px;background:#f7f7f7;box-shadow:0 0 0 .6px #e6e6e6"></div>
<svg class="a" style="left:472.5px;top:201.8px" width="10.5" height="9" viewBox="0 0 10.5 9"><path d="M.5.5h7l2.5 2.5v5.5H.5z" fill="none" stroke="#444" stroke-width=".9"/><path d="M.5 4h4v4.5" fill="none" stroke="#444" stroke-width=".8"/></svg>
<div class="a" style="left:493.7px;top:197.3px;width:19.3px;height:18px;border-radius:2px;background:#f7f7f7;box-shadow:0 0 0 .6px #e6e6e6"></div>
<svg class="a" style="left:498.5px;top:202px" width="10.5" height="8.5" viewBox="0 0 10.5 8.5"><path d="M3 .8H1.5L.5 2M7.5 .8H9l1 1.2M3 7.7H1.5L.5 6.5M7.5 7.7H9l1-1.2" fill="none" stroke="#c4c4c4" stroke-width=".8"/><rect x="3" y="3" width="4.5" height="2.5" fill="#c4c4c4"/></svg>
<div class="a" style="left:458px;top:224.5px;width:139px;height:1px;background:#e0e0e0"></div>
<svg class="a" style="left:466.5px;top:236px" width="6" height="4" viewBox="0 0 6 4"><path d="M.7 .8L3 3.1 5.3.8" fill="none" stroke="#444" stroke-width="1"/></svg>
<div class="t" id="props" style="left:478px;top:233.5px;font-size:8.3px;font-weight:bold;color:#333;transform:scaleX(.93);transform-origin:0 0">Properties</div>
<div class="t" id="csize" style="left:467px;top:256px;font-size:6.8px;color:#555;transform:scaleX(.93);transform-origin:0 0">Canvas Size</div>
<div class="t" style="left:467px;top:269.2px;font-size:6.8px;color:#555">W</div>
<div class="t" id="wval" style="left:477.5px;top:269px;font-size:7.4px;color:#333;transform:scaleX(.95);transform-origin:0 0">1,024px</div>
<div class="a" style="left:478px;top:280.5px;width:42px;height:1px;background:#e0e0e0"></div>
<div class="t" style="left:524.8px;top:269.2px;font-size:6.8px;color:#555">H</div>
<div class="t" id="hval" style="left:533.5px;top:269px;font-size:7.4px;color:#333">768px</div>
<div class="a" style="left:534px;top:280.5px;width:43.5px;height:1px;background:#e0e0e0"></div>
<svg class="a" style="left:584.3px;top:269px" width="4.5" height="5.5" viewBox="0 0 4.5 5.5"><path d="M1.2 2.5V1.5a1 1 0 0 1 2 0" fill="none" stroke="#666" stroke-width=".7"/><rect x=".3" y="2.5" width="3.9" height="3" fill="#666"/></svg>
<div class="t" id="units" style="left:466.5px;top:292.5px;font-size:7.2px;color:#555">Units</div>
<div class="a" style="left:467.3px;top:301px;width:121.7px;height:17.5px;border-radius:2px;background:#fff;box-shadow:0 0 0 .6px #e4e4e4"></div>
<div class="t" id="pix" style="left:474.2px;top:306px;font-size:8px;color:#333;transform:scaleX(.95);transform-origin:0 0">Pixels</div>
<svg class="a" style="left:576.5px;top:308.5px" width="7" height="5" viewBox="0 0 7 5"><path d="M.8 1l2.7 2.7L6.2 1" fill="none" stroke="#444" stroke-width="1"/></svg>
<div class="t" id="res" style="left:466.5px;top:330.5px;font-size:7px;color:#555;transform:scaleX(.95);transform-origin:0 0">Resolution</div>
<div class="t" id="r72" style="left:466.5px;top:344px;font-size:8.2px;color:#333">72</div>
<div class="a" style="left:467px;top:356px;width:27px;height:1px;background:#e0e0e0"></div>
<div class="a" style="left:500px;top:338.3px;width:88.5px;height:17.4px;border-radius:2px;background:#fff;box-shadow:0 0 0 .6px #e4e4e4"></div>
<div class="t" id="ppi" style="left:506.2px;top:344px;font-size:8px;color:#333;transform:scaleX(.95);transform-origin:0 0">Pixels/Inch</div>
<svg class="a" style="left:576.5px;top:345.5px" width="7" height="5" viewBox="0 0 7 5"><path d="M.8 1l2.7 2.7L6.2 1" fill="none" stroke="#444" stroke-width="1"/></svg>
<div class="a" style="left:467.6px;top:369.7px;width:7.4px;height:7.3px;border-radius:1.5px;background:#505050"></div>
<svg class="a" style="left:467.6px;top:369.7px" width="7.4" height="7.3" viewBox="0 0 7.4 7.3"><path d="M1.6 3.7l1.5 1.5 2.8-3" fill="none" stroke="#fff" stroke-width="1"/></svg>
<div class="t" id="grid" style="left:479px;top:369.5px;font-size:7.2px;color:#444">Grid</div>
<div class="a" style="left:561px;top:366.3px;width:28.3px;height:13.7px;border-radius:2.5px;background:#555;box-shadow:0 0 0 .6px #3e3e3e"></div>
<!-- end rp -->
<div class="a" style="left:597px;top:1px;width:1px;height:464px;background:#b4d2e8"></div>
<div class="a" style="left:598px;top:1px;width:1px;height:464px;background:#5f9cc8"></div>
<div class="a" style="left:599px;top:1px;width:1px;height:464px;background:#e6f2fa"></div>
<div class="a" style="left:0;top:1px;width:1px;height:464px;background:#68a2d2"></div>
<div class="a" style="left:1px;top:1px;width:1px;height:464px;background:#b9d8ee"></div>
<div class="a" style="left:0;top:37px;width:1.5px;height:21px;background:#1f3d64"></div>
</body></html>
